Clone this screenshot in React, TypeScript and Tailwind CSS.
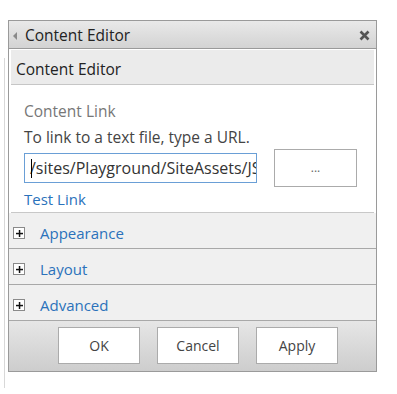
import React from "react";

const font = { fontFamily: '"Open Sans", "Noto Sans", sans-serif' };

function PlusBox() {
  return (
    <div className="w-[12px] h-[12px] border border-[#8a8a8a] bg-white flex items-center justify-center shrink-0">
      <svg width="7" height="7" viewBox="0 0 7 7">
        <rect x="2.8" y="0" width="1.5" height="7" fill="#111" />
        <rect x="0" y="2.8" width="7" height="1.5" fill="#111" />
      </svg>
    </div>
  );
}

function Row({ label }: { label: string }) {
  return (
    <div className="h-[36px] bg-[#f0f0f0] border-b border-[#a8a8a8] flex items-center pl-[4px] pt-[5px]">
      <PlusBox />
      <span className="ml-[15px] text-[15px] text-[#2b72bb]">{label}</span>
    </div>
  );
}

function Btn({ label }: { label: string }) {
  return (
    <div className="w-[82px] h-[37px] bg-white border border-[#ababab] flex items-center justify-center text-[14px] text-[#444]">
      {label}
    </div>
  );
}

export default function App() {
  return (
    <div className="w-[397px] h-[394px] bg-white flex pl-[4px]" style={font}>
      <div className="w-px mt-[58px] h-[330px] bg-[#d8d8d8]" />
      <div className="ml-[3px] mt-[20px] w-[369px] h-[352px] border border-[#9a9a9a] flex flex-col">
        <div className="h-[28px] bg-gradient-to-b from-[#e9e9e9] to-[#d3d3d3] border-b border-[#9a9a9a] flex items-center pl-[4px] pr-[6px] pt-[2px]">
          <svg width="5" height="8" viewBox="0 0 5 8" className="mr-[7px]">
            <path d="M4 0 L0 4 L4 8 Z" fill="#8a8a8a" />
          </svg>
          <span className="text-[15.5px] text-[#222] leading-none">Content Editor</span>
          <svg width="11" height="11" viewBox="0 0 11 11" className="ml-auto">
            <path d="M1.5 1.5 L9.5 9.5 M9.5 1.5 L1.5 9.5" stroke="#555" strokeWidth="2.6" />
          </svg>
        </div>
        <div className="mx-[2px] mt-[1px] h-[35px] bg-[#ebebeb] border-b border-[#c6c6c6] flex items-center pl-[5px] pt-[5px] text-[15.5px] text-[#222]">
          Content Editor
        </div>
        <div className="pl-[13px] pt-[16px] pb-[2px] mx-[2px] border-b border-[#c8c8c8]">
          <div className="h-[20px] leading-[20px] text-[15.5px] text-[#777]">Content Link</div>
          <div className="mt-[6px] h-[20px] leading-[20px] text-[15.5px] text-[#444]">To link to a text file, type a URL.</div>
          <div className="mt-[2px] flex items-center">
            <div className="w-[233px] h-[30px] border border-[#6a9fd6] bg-white overflow-hidden flex items-center pl-[5px] relative">
              <span className="whitespace-nowrap text-[16px] text-[#333]">/sites/Playground/SiteAssets/JS/script.js</span>
              <div className="absolute left-[6px] top-[5px] w-px h-[19px] bg-black" />
            </div>
            <div className="ml-[17px] w-[83px] h-[38px] border border-[#ababab] bg-white flex items-center justify-center text-[12px] text-[#666]">
              ...
            </div>
          </div>
          <div className="mt-[1px] h-[22px] leading-[22px] text-[15px] text-[#2b72bb]">Test Link</div>
        </div>
        <div className="flex flex-col">
          <Row label="Appearance" />
          <Row label="Layout" />
          <Row label="Advanced" />
        </div>
        <div className="flex-1 bg-gradient-to-b from-[#e6e6e6] to-[#cdcdcd] flex items-start pt-[6px] pl-[49px] gap-[17px]">
          <Btn label="OK" />
          <Btn label="Cancel" />
          <Btn label="Apply" />
        </div>
      </div>
    </div>
  );
}
